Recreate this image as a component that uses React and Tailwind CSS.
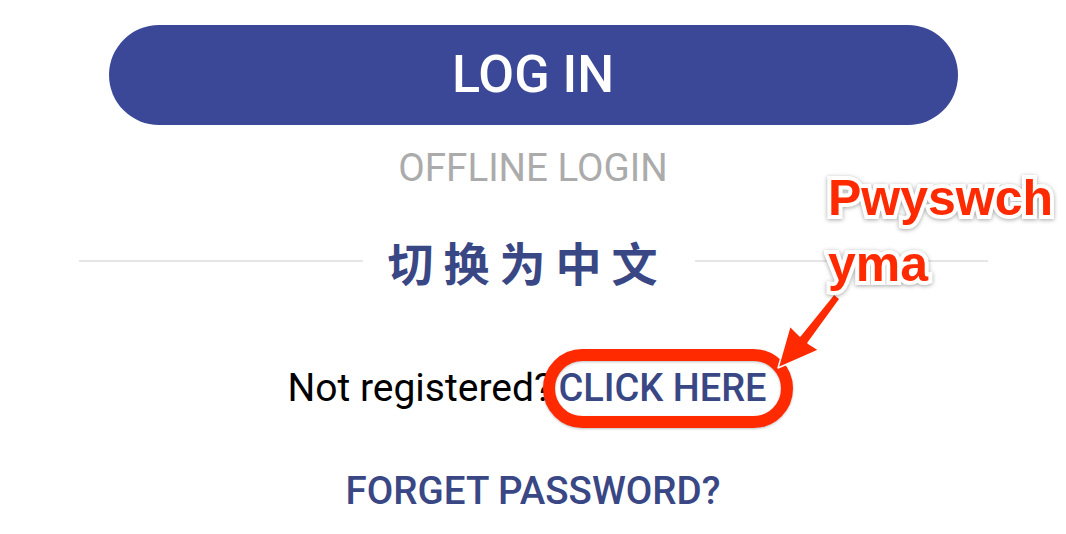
export default function App() {
  return (
    <div className="relative w-[1066px] h-[534px] overflow-hidden bg-white font-['Roboto',sans-serif]">
      <div className="flex flex-col items-center pt-[25px]">
        <button className="flex h-[100px] w-[849px] items-center justify-center rounded-full bg-[#3a4897] text-[52px] font-medium text-white">
          LOG IN
        </button>
        <div className="mt-[23px] h-[40px] text-[38.5px] leading-[40px] text-[#ababab]">OFFLINE LOGIN</div>
        <div className="mt-[48px] flex h-[50px] w-[909px] items-center">
          <div className="h-[2px] flex-1 bg-[#e6e6e6]" />
          <div className="pl-[25px] pr-[27px] text-[46px] font-bold leading-[50px] tracking-[10px] text-[#3a4785] font-['Noto_Sans_CJK_SC',sans-serif]">
            切换为中文
          </div>
          <div className="h-[2px] w-[293px] bg-[#e6e6e6]" />
        </div>
        <div className="mt-[80px] flex h-[44px] items-baseline pr-[12px] leading-[44px] text-black">
          <span className="text-[39px]">Not registered?</span>
          <span className="ml-[6px] text-[38px] font-medium text-[#3a4785]">CLICK HERE</span>
        </div>
        <div className="mt-[59px] h-[44px] text-[38.5px] font-medium leading-[44px] text-[#3a4785]">FORGET PASSWORD?</div>
      </div>

      {/* annotation: ring */}
      <div className="absolute left-[543px] top-[349px] h-[79px] w-[250px] rounded-full border-[12px] border-[#ff2a00] drop-shadow-[0_1px_1px_rgba(0,0,0,0.25)]" />

      {/* annotation: arrow */}
      <svg className="absolute left-0 top-0" width="1066" height="534" viewBox="0 0 1066 534">
        <polygon
          points="778,368 790,326 800,336 834,294 840,299 808,343 819,350"
          fill="#ff2a00"
          stroke="white"
          strokeWidth="1.5"
          strokeLinejoin="round"
        />
      </svg>

      {/* annotation: label */}
      <div className="absolute left-[828px] top-[165px] text-[50px] font-bold leading-[66px] text-[#ff2a00] font-['Liberation_Sans',Arial,sans-serif] [-webkit-text-stroke:8px_white] [paint-order:stroke_fill] drop-shadow-[0_1px_2px_rgba(0,0,0,0.35)]">
        <div>Pwyswch</div>
        <div>yma</div>
      </div>
    </div>
  );
}
